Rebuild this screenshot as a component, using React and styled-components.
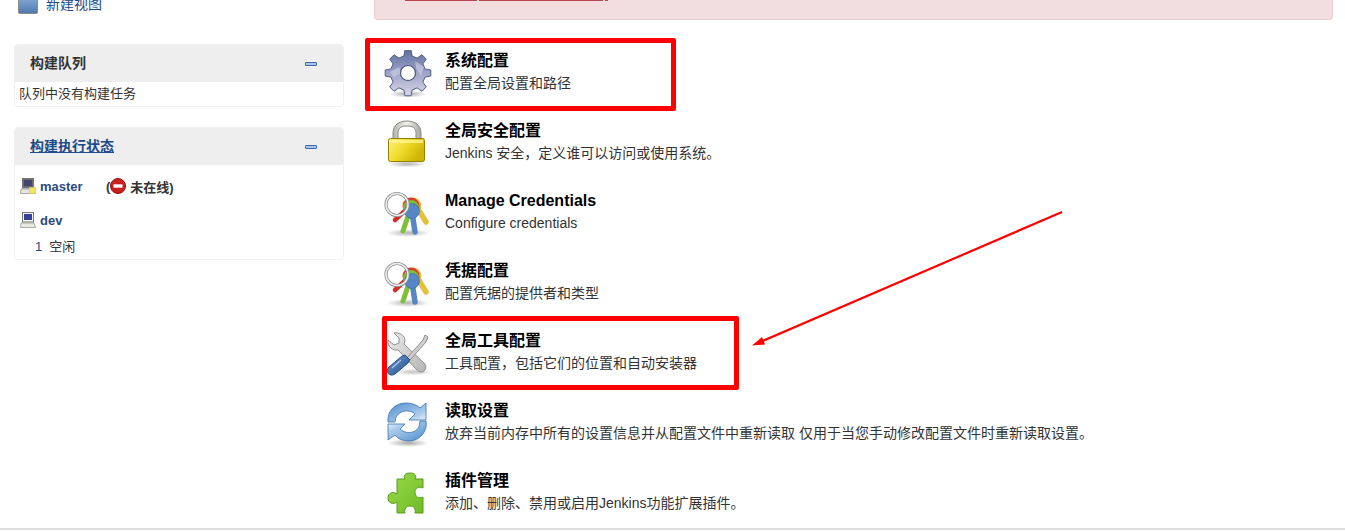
import React from 'react';
import styled, { createGlobalStyle } from 'styled-components';

const GlobalStyle = createGlobalStyle`
html,body{
  margin:0;
  padding:0;
  background:#fff;
  overflow:hidden;
}
body{
  font-family:"Liberation Sans","Noto Sans CJK SC",Arial,sans-serif;
  color:#333;
}
`;

function gearPath(cx, cy, outer, inner, teeth) {
  const step = (Math.PI * 2) / teeth;
  const pts = [];
  for (let i = 0; i < teeth; i++) {
    const a = i * step - Math.PI / 2;
    const w = step * 0.17;
    const v = step * 0.3;
    pts.push([a - v, inner], [a - w, outer], [a + w, outer], [a + v, inner]);
  }
  return (
    pts
      .map(([a, r], i) => `${i ? 'L' : 'M'}${(cx + r * Math.cos(a)).toFixed(2)} ${(cy + r * Math.sin(a)).toFixed(2)}`)
      .join(' ') + ' Z'
  );
}

const GearIcon = () => (
  <svg width="48" height="48" viewBox="0 0 48 48">
    <defs>
      <linearGradient id="gearFill" x1="0" y1="0" x2="0" y2="1">
        <stop offset="0" stopColor="#5f709f" />
        <stop offset="0.45" stopColor="#989fc4" />
        <stop offset="1" stopColor="#d8d5e8" />
      </linearGradient>
      <radialGradient id="gearShadow">
        <stop offset="0" stopColor="#000" stopOpacity="0.35" />
        <stop offset="1" stopColor="#000" stopOpacity="0" />
      </radialGradient>
    </defs>
    <ellipse cx="24" cy="44" rx="19" ry="3.5" fill="url(#gearShadow)" />
    <path d={gearPath(24, 23, 23, 17.5, 8)} fill="url(#gearFill)" stroke="#515f84" strokeWidth="1" strokeLinejoin="round" />
    <path d="M6 22 L15 17 L17 23 L10 27 Z M31 11 L40 17 L37 26 L32 18 Z" fill="#d0d3e6" opacity="0.6" />
    <circle cx="24" cy="23" r="7.5" fill="#fff" stroke="#4b5980" strokeWidth="1.2" />
  </svg>
);

const LockIcon = () => (
  <svg width="48" height="48" viewBox="0 0 48 48">
    <defs>
      <linearGradient id="lockBody" x1="0" y1="0" x2="1" y2="0.5">
        <stop offset="0" stopColor="#fff27a" />
        <stop offset="0.5" stopColor="#f0dc2c" />
        <stop offset="1" stopColor="#cdb400" />
      </linearGradient>
      <linearGradient id="lockBow" x1="0" y1="0" x2="1" y2="0">
        <stop offset="0" stopColor="#b5b5ae" />
        <stop offset="0.5" stopColor="#f2f2ee" />
        <stop offset="1" stopColor="#a4a49e" />
      </linearGradient>
      <radialGradient id="lockShadow">
        <stop offset="0" stopColor="#000" stopOpacity="0.3" />
        <stop offset="1" stopColor="#000" stopOpacity="0" />
      </radialGradient>
    </defs>
    <ellipse cx="23" cy="44" rx="20" ry="3.5" fill="url(#lockShadow)" />
    <path d="M9 22 V13 C9 5 15 1 23 1 C31 1 37 5 37 13 V22 H32 V13 C32 8 29 6 23 6 C17 6 14 8 14 13 V22 Z" fill="url(#lockBow)" stroke="#8a8a84" strokeWidth="1" />
    <rect x="4.5" y="18.5" width="36" height="23" rx="2" fill="url(#lockBody)" stroke="#8f7f00" strokeWidth="1" />
    <rect x="6" y="20" width="33" height="3" fill="#fff6a0" opacity="0.7" />
  </svg>
);

const KeysIcon = ({ id }) => (
  <svg width="48" height="48" viewBox="0 0 48 48">
    <defs>
      <radialGradient id={`keysShadow${id}`}>
        <stop offset="0" stopColor="#000" stopOpacity="0.3" />
        <stop offset="1" stopColor="#000" stopOpacity="0" />
      </radialGradient>
    </defs>
    <ellipse cx="24" cy="43" rx="22" ry="4" fill={`url(#keysShadow${id})`} />
    <path d="M31 14 L42 32" stroke="#e2c23c" strokeWidth="5.5" strokeLinecap="round" />
    <circle cx="29" cy="16" r="8.5" fill="#e2c23c" />
    <path d="M26 16 L11 30" stroke="#d62d22" strokeWidth="4.5" strokeLinecap="round" />
    <circle cx="27" cy="16" r="8.5" fill="#d93a2f" />
    <path d="M26 20 L19 41" stroke="#7fbf3a" strokeWidth="5" strokeLinecap="round" />
    <circle cx="27" cy="18" r="8" fill="#7fbf3a" />
    <path d="M28 22 L31 42" stroke="#5687c4" strokeWidth="5.5" strokeLinecap="round" />
    <circle cx="28" cy="21" r="7.5" fill="#5687c4" stroke="#3b6ba6" strokeWidth="0.7" />
    <circle cx="13" cy="14.5" r="11" fill="none" stroke="#8e8e8e" strokeWidth="3.2" />
    <circle cx="13" cy="14.5" r="11" fill="none" stroke="#ececec" strokeWidth="1.6" />
  </svg>
);

const ToolsIcon = () => (
  <svg width="48" height="48" viewBox="0 0 48 48">
    <defs>
      <radialGradient id="toolsShadow">
        <stop offset="0" stopColor="#000" stopOpacity="0.25" />
        <stop offset="1" stopColor="#000" stopOpacity="0" />
      </radialGradient>
      <linearGradient id="toolsSteel" x1="0" y1="0" x2="1" y2="1">
        <stop offset="0" stopColor="#ececec" />
        <stop offset="1" stopColor="#b4b4b4" />
      </linearGradient>
      <linearGradient id="toolsBlue" x1="0" y1="0" x2="1" y2="1">
        <stop offset="0" stopColor="#6f9bd0" />
        <stop offset="1" stopColor="#244f8a" />
      </linearGradient>
    </defs>
    <ellipse cx="29" cy="42" rx="19" ry="3.5" fill="url(#toolsShadow)" />
    <path d="M4 10 L10 15 L15 13 L15 8 L10 3 C15 2 21 5 21 11 L20 14 L40 33 C43 36 42 39 40 41 C38 43 35 42 33 40 L14 20 C9 21 3 17 4 10 Z" fill="url(#toolsSteel)" stroke="#858585" strokeWidth="0.9" strokeLinejoin="round" />
    <path d="M23 28 L39 10 L41 5 L44 7 L42 12 L26 30 Z" fill="url(#toolsSteel)" stroke="#858585" strokeWidth="0.9" strokeLinejoin="round" />
    <path d="M21 25 L26 30 L24 33 L11 44 C8 46 5 45 4 43 C3 41 3 39 5 37 L18 26 Z" fill="url(#toolsBlue)" stroke="#1f4273" strokeWidth="0.9" strokeLinejoin="round" />
    <path d="M8 38 L17 30" stroke="#a9c6ea" strokeWidth="1.3" fill="none" />
  </svg>
);

const RefreshIcon = () => (
  <svg width="48" height="48" viewBox="0 0 48 48">
    <defs>
      <linearGradient id="reloadTop" x1="0" y1="0" x2="1" y2="1">
        <stop offset="0" stopColor="#4f8ccb" />
        <stop offset="0.7" stopColor="#a8cbec" />
        <stop offset="1" stopColor="#f4f8fc" />
      </linearGradient>
      <linearGradient id="reloadBottom" x1="1" y1="1" x2="0" y2="0">
        <stop offset="0" stopColor="#4f8ccb" />
        <stop offset="0.7" stopColor="#a8cbec" />
        <stop offset="1" stopColor="#f4f8fc" />
      </linearGradient>
      <radialGradient id="reloadShadow">
        <stop offset="0" stopColor="#000" stopOpacity="0.35" />
        <stop offset="1" stopColor="#000" stopOpacity="0" />
      </radialGradient>
    </defs>
    <ellipse cx="24" cy="43" rx="21" ry="4" fill="url(#reloadShadow)" />
    <path d="M4 22 C3 11 11 3 22 3 C28 3 33 5 36 8 L42 3 V20 L25 20 L31 14 C26 9 16 10 12 17 L11 22 Z" fill="url(#reloadTop)" stroke="#3f74ad" strokeWidth="0.8" strokeLinejoin="round" />
    <path d="M42 21 C44 31 36 41 25 41 C19 41 14 39 11 35 L4 40 V24 L21 24 L16 29 C21 34 31 34 35 27 L36 21 Z" fill="url(#reloadBottom)" stroke="#3f74ad" strokeWidth="0.8" strokeLinejoin="round" />
  </svg>
);

const PuzzleIcon = () => (
  <svg width="48" height="48" viewBox="0 0 48 48">
    <defs>
      <linearGradient id="puzzleFill" x1="0" y1="0" x2="1" y2="1">
        <stop offset="0" stopColor="#9bdc48" />
        <stop offset="1" stopColor="#6fbb28" />
      </linearGradient>
    </defs>
    <path
      d="M13 9 H21 C19 6 21 3 26 3 C31 3 33 6 31 9 H39 V18 C35 16 31 18 31 22 C31 27 35 29 39 27 V43 H31 C32 39 30 36 26 36 C22 36 20 39 21 43 H13 V32 C9 35 4 33 4 28 C4 23 9 21 13 24 Z"
      fill="url(#puzzleFill)"
      stroke="#5a9a1c"
      strokeWidth="1"
      strokeLinejoin="round"
    />
  </svg>
);

const FolderIcon = () => (
  <svg width="20" height="24" viewBox="0 0 20 24">
    <defs>
      <linearGradient id="folderFill" x1="0" y1="0" x2="0" y2="1">
        <stop offset="0" stopColor="#8fb0da" />
        <stop offset="1" stopColor="#4d78ae" />
      </linearGradient>
    </defs>
    <rect x="0.5" y="4.5" width="19" height="18" rx="1" fill="url(#folderFill)" stroke="#8a8a8a" />
  </svg>
);

const ComputerIcon = ({ offline }) => (
  <svg width="16" height="16" viewBox="0 0 16 16">
    <rect x="2.5" y="0.5" width="11" height="9.5" fill={offline ? '#6a6a72' : '#f4f4f4'} stroke="#77777a" />
    <rect x="4" y="2" width="8" height="6" fill={offline ? '#44446e' : '#36458f'} />
    <path d="M1 11 H14 L15.5 15.5 H0.5 Z" fill="#e8e8e0" stroke="#9a9a92" strokeWidth="0.8" />
    {offline && <rect x="9.5" y="9.5" width="6" height="6" fill="#f2e36a" stroke="#d8cb5a" strokeWidth="0.7" />}
  </svg>
);

const NoEntryIcon = () => (
  <svg width="16" height="16" viewBox="0 0 16 16">
    <circle cx="8" cy="8" r="7.5" fill="#cc1f1f" stroke="#8f1212" strokeWidth="1" />
    <rect x="3.5" y="6.3" width="9" height="3.4" fill="#fff" />
  </svg>
);

const CollapseIcon = () => (
  <svg width="12" height="4" viewBox="0 0 12 4">
    <rect x="0.5" y="0.5" width="11" height="3" rx="0.5" fill="#a8c4e8" stroke="#3f6aa8" />
  </svg>
);

const Page = styled.div`
display:flex;
flex-direction:column;
width:1345px;
height:532px;
overflow:hidden;
position:relative;
`;
const Content = styled.div`
flex:1;
min-height:0;
display:flex;
gap:30px;
padding:0 12px 0 14px;
`;
const Footer = styled.div`
height:2px;
border-top:2px solid #dedede;
`;
const Sidebar = styled.div`
width:330px;
flex:none;
`;
const TaskLink = styled.div`
display:flex;
align-items:center;
gap:8px;
height:24px;
margin:-9px 0 29px 4px;
font-size:14px;
color:#204a87;
`;
const Pane = styled.div`
border:1px solid #f0f0f0;
border-radius:4px;
margin-bottom:${props => props.$gap}px;
overflow:hidden;
`;
const PaneHead = styled.div`
display:flex;
align-items:center;
justify-content:space-between;
height:37px;
padding:0 26px 0 15px;
background:#eee;
font-size:14px;
font-weight:bold;
color:#333;
`;
const PaneTitle = styled.span`
margin-bottom:4px;
`;
const PaneLink = styled.a`
margin-bottom:4px;
color:#204a87;
text-decoration:underline;
`;
const PaneBody = styled.div`
font-size:13px;
line-height:24px;
height:24px;
padding-left:4px;
`;
const ExecBody = styled.div`
padding:8px 5px 0;
font-size:13px;
height:94px;
box-sizing:border-box;
`;
const NodeRow = styled.div`
display:flex;
align-items:center;
height:26px;
margin-bottom:${props => props.$gap}px;
`;
const NodeName = styled.a`
font-weight:bold;
color:#2c4a80;
margin-left:4px;
width:66px;
`;
const NodeStatus = styled.span`
display:flex;
align-items:center;
font-weight:bold;
svg{
  margin-right:4px;
}
`;
const Executor = styled.div`
display:flex;
gap:7px;
padding-left:15px;
margin-top:-4px;
line-height:20px;
color:#333;
b{
  font-weight:normal;
  color:#204a87;
}
`;
const Main = styled.div`
flex:1;
min-width:0;
`;
const Alert = styled.div`
box-sizing:border-box;
height:20px;
margin-bottom:19px;
padding-left:30px;
background:#f2dede;
border:1px solid #ebccd1;
border-top:0;
border-radius:0 0 4px 4px;
`;
const AlertLinks = styled.div`
display:flex;
gap:2px;
align-items:flex-start;
`;
const AlertLink = styled.span`
display:block;
height:1px;
width:${props => props.$width}px;
background:#b84848;
`;
const Item = styled.div`
display:flex;
align-items:center;
height:70px;
padding-left:10px;
gap:13px;
`;
const ItemText = styled.div`
display:flex;
flex-direction:column;
gap:2px;
margin-bottom:5px;
`;
const ItemTitle = styled.div`
font-size:16px;
font-weight:bold;
line-height:20px;
color:#000;
`;
const ItemDesc = styled.div`
font-size:14px;
line-height:20px;
color:#333;
`;
const Highlight = styled.div`
position:absolute;
left:${props => props.$left}px;
top:${props => props.$top}px;
width:${props => props.$width}px;
height:${props => props.$height}px;
box-sizing:border-box;
border:5px solid #ff0000;
border-radius:2px;
pointer-events:none;
`;
const ArrowLayer = styled.svg`
position:absolute;
left:745px;
top:205px;
width:325px;
height:150px;
pointer-events:none;
`;

const items = [
  { icon: <GearIcon />, title: '系统配置', desc: '配置全局设置和路径' },
  { icon: <LockIcon />, title: '全局安全配置', desc: 'Jenkins 安全，定义谁可以访问或使用系统。' },
  { icon: <KeysIcon id="a" />, title: 'Manage Credentials', desc: 'Configure credentials' },
  { icon: <KeysIcon id="b" />, title: '凭据配置', desc: '配置凭据的提供者和类型' },
  { icon: <ToolsIcon />, title: '全局工具配置', desc: '工具配置，包括它们的位置和自动安装器' },
  { icon: <RefreshIcon />, title: '读取设置', desc: '放弃当前内存中所有的设置信息并从配置文件中重新读取 仅用于当您手动修改配置文件时重新读取设置。' },
  { icon: <PuzzleIcon />, title: '插件管理', desc: '添加、删除、禁用或启用Jenkins功能扩展插件。' },
];

export default function App() {
  return (
    <Page>
      <GlobalStyle />
      <Content>
        <Sidebar>
          <TaskLink>
            <FolderIcon />
            新建视图
          </TaskLink>
          <Pane $gap={20}>
            <PaneHead>
              <PaneTitle>构建队列</PaneTitle>
              <CollapseIcon />
            </PaneHead>
            <PaneBody>队列中没有构建任务</PaneBody>
          </Pane>
          <Pane $gap={0}>
            <PaneHead>
              <PaneLink>构建执行状态</PaneLink>
              <CollapseIcon />
            </PaneHead>
            <ExecBody>
              <NodeRow $gap={8}>
                <ComputerIcon offline />
                <NodeName>master</NodeName>
                <NodeStatus>
                  (<NoEntryIcon />未在线)
                </NodeStatus>
              </NodeRow>
              <NodeRow $gap={8}>
                <ComputerIcon />
                <NodeName>dev</NodeName>
              </NodeRow>
              <Executor>
                <b>1</b>
                <span>空闲</span>
              </Executor>
            </ExecBody>
          </Pane>
        </Sidebar>
        <Main>
          <Alert>
            <AlertLinks>
              <AlertLink $width={72} />
              <AlertLink $width={124} />
              <AlertLink $width={3} />
            </AlertLinks>
          </Alert>
          {items.map(item => (
            <Item key={item.title}>
              {item.icon}
              <ItemText>
                <ItemTitle>{item.title}</ItemTitle>
                <ItemDesc>{item.desc}</ItemDesc>
              </ItemText>
            </Item>
          ))}
        </Main>
      </Content>
      <Footer />
      <Highlight $left={365} $top={38} $width={311} $height={73} />
      <Highlight $left={382} $top={316} $width={357} $height={74} />
      <ArrowLayer viewBox="745 205 325 150">
        <path d="M1062 212 L758 343" stroke="#ff0000" strokeWidth="2.2" fill="none" />
        <path d="M752 345.5 L762 337 L765 344.5 Z" fill="#ff0000" />
      </ArrowLayer>
    </Page>
  );
}
